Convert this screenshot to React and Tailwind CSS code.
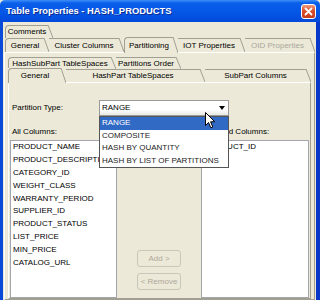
import React from 'react';

const line = '#a09f92';

function Tab({ label, width, selected, disabled, first, height }) {
    return (
        <div className={`flex shrink-0 ${width} ${height} ${selected ? 'relative z-10 -mb-px bg-[#ece9d8]' : ''}`}>
            <div
                className={`flex-1 flex items-center justify-center border-t border-[#a09f92] whitespace-nowrap ${
                    first || selected ? 'border-l rounded-tl-[4px]' : ''
                } ${disabled ? 'text-[#a9a89b]' : 'text-black'}`}
            >
                {label}
            </div>
            <svg className="w-[5px] h-full" viewBox="0 0 5 10" preserveAspectRatio="none">
                <polygon points="0,0 5,10 0,10" fill="#ece9d8" />
                <line x1="0" y1="0" x2="5" y2="10" stroke={line} strokeWidth="1" vectorEffect="non-scaling-stroke" />
            </svg>
        </div>
    );
}

const columns = [
    'PRODUCT_NAME',
    'PRODUCT_DESCRIPTION',
    'CATEGORY_ID',
    'WEIGHT_CLASS',
    'WARRANTY_PERIOD',
    'SUPPLIER_ID',
    'PRODUCT_STATUS',
    'LIST_PRICE',
    'MIN_PRICE',
    'CATALOG_URL',
];

const options = ['RANGE', 'COMPOSITE', 'HASH BY QUANTITY', 'HASH BY LIST OF PARTITIONS'];

export default function App() {
    return (
        <div className="relative w-[320px] h-[300px] overflow-hidden bg-[#ece9d8] flex flex-col font-['Liberation_Sans',Arial,sans-serif] text-[8px] leading-none">
            {/* title bar */}
            <div className="h-[22px] shrink-0 flex items-center justify-between pl-[6px] pr-[4px] rounded-t-[5px] bg-[linear-gradient(180deg,#3d8ff7_0%,#0a5ee9_14%,#0557e6_55%,#0349da_100%)]">
                <span className="text-white font-bold text-[9.4px] [text-shadow:1px_1px_0_#0b2c92]">
                    Table Properties - HASH_PRODUCTS
                </span>
                <div className="w-[15px] h-[15px] rounded-[3px] border border-white flex items-center justify-center bg-[linear-gradient(180deg,#f09a7c_0%,#dc4f2e_45%,#c43b1b_100%)]">
                    <svg width="9" height="9" viewBox="0 0 9 9">
                        <path d="M1.5 1.5 L7.5 7.5 M7.5 1.5 L1.5 7.5" stroke="white" strokeWidth="1.8" strokeLinecap="round" />
                    </svg>
                </div>
            </div>

            {/* window body */}
            <div className="flex-1 flex flex-col border-l-[3px] border-r-[4px] border-l-[#0a4ad8] border-r-[#0838c8] pt-[3px] px-[1px]">
                <div className="flex h-[13px] pl-[1px]">
                    <Tab label="Comments" width="w-[48px]" height="h-[13px]" first />
                </div>
                <div className="flex items-end h-[14px] pl-[1px]">
                    <Tab label="General" width="w-[44px]" height="h-[14px]" first />
                    <Tab label="Cluster Columns" width="w-[75px]" height="h-[14px]" />
                    <Tab label="Partitioning" width="w-[54px]" height="h-[16px]" selected />
                    <Tab label="IOT Properties" width="w-[67px]" height="h-[14px]" />
                    <Tab label="OID Properties" width="w-[70px]" height="h-[14px]" disabled />
                </div>

                {/* outer panel */}
                <div className="flex-1 flex flex-col border border-[#a09f92] border-l-white border-t-white pt-[4px] px-[3px]">
                    <div className="flex h-[12px]">
                        <Tab label="HashSubPart TableSpaces" width="w-[108px]" height="h-[12px]" first />
                        <Tab label="Partitions Order" width="w-[65px]" height="h-[12px]" />
                    </div>
                    <div className="flex items-end h-[13px]">
                        <Tab label="General" width="w-[58px]" height="h-[15px]" selected />
                        <Tab label="HashPart TableSpaces" width="w-[139px]" height="h-[13px]" />
                        <Tab label="SubPart Columns" width="w-[106px]" height="h-[13px]" />
                    </div>

                    {/* sub panel */}
                    <div className="flex-1 flex flex-col border border-[#a09f92] border-l-white border-t-white pt-[17px] pl-[1px]">
                        <div className="flex items-center h-[16px]">
                            <span className="w-[89px] pl-[2px]">Partition Type:</span>
                            <div className="relative z-20 w-[130px] h-[16px] border border-[#9a9a9a] bg-[linear-gradient(180deg,#ffffff_60%,#e8e8e4_100%)] flex items-center justify-between pl-[2px] pr-[3px]">
                                <span>RANGE</span>
                                <svg width="6" height="4" viewBox="0 0 6 4">
                                    <path d="M0 0 H6 L3 4 Z" fill="black" />
                                </svg>
                                <div className="absolute left-[-1px] top-[15px] w-[130px] border border-[#555] bg-white">
                                    {options.map((o, i) => (
                                        <div
                                            key={o}
                                            className={`h-[12.5px] flex items-center pl-[2px] ${
                                                i === 0 ? 'bg-[#316ac5] text-white' : 'text-[#222]'
                                            }`}
                                        >
                                            {o}
                                        </div>
                                    ))}
                                </div>
                            </div>
                        </div>

                        <div className="flex h-[10px] mt-[11px] items-center">
                            <span className="w-[192px] pl-[2px]">All Columns:</span>
                            <span>Selected Columns:</span>
                        </div>

                        <div className="flex flex-1 mt-[3px]">
                            <div className="w-[107px] border border-[#a3a7ad] bg-white pl-[2px] overflow-hidden">
                                {columns.map((c) => (
                                    <div key={c} className="h-[12.8px] flex items-center whitespace-nowrap">
                                        {c}
                                    </div>
                                ))}
                            </div>
                            <div className="w-[84px] flex flex-col items-center pt-[110px] gap-[6px]">
                                <div className="w-[44px] h-[17px] rounded-[3px] border border-[#c9c7ba] text-[#aca899] flex items-center justify-center">
                                    Add &gt;
                                </div>
                                <div className="w-[44px] h-[17px] rounded-[3px] border border-[#c9c7ba] text-[#aca899] flex items-center justify-center">
                                    &lt; Remove
                                </div>
                            </div>
                            <div className="w-[108px] border border-[#a3a7ad] bg-white pl-[2px]">
                                <div className="h-[12.8px] flex items-center">PRODUCT_ID</div>
                            </div>
                        </div>
                    </div>
                </div>
            </div>

            {/* mouse pointer */}
            <svg className="absolute left-[205px] top-[112px] z-30" width="12" height="17" viewBox="0 0 12 17">
                <path d="M0.5 0.5 L0.5 13.5 L3.5 10.5 L5.8 15.8 L7.8 15 L5.6 9.8 L9.8 9.8 Z" fill="white" stroke="black" strokeWidth="1" strokeLinejoin="round" />
            </svg>
        </div>
    );
}
